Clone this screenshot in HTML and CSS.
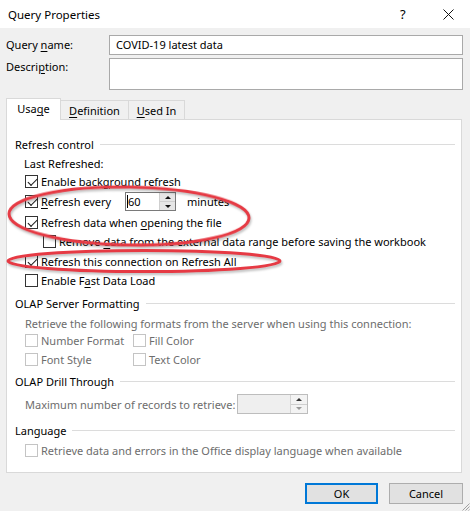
FILE: index.html
```html
<!DOCTYPE html>
<html>
<head>
<meta charset="utf-8">
<link rel="stylesheet" href="styles.css">
</head>
<body>
<div class="window">
  <div class="titlebar">
    <span class="title">Query Properties</span>
    <span class="help">?</span>
    <span class="close"><svg width="11" height="11" viewBox="0 0 11 11"><path d="M0.5 0.5 L10.5 10.5 M10.5 0.5 L0.5 10.5" stroke="#111" stroke-width="1"/></svg></span>
  </div>
  <div class="content">
    <div class="field">
      <div class="flabel">Query <u>n</u>ame:</div>
      <div class="input">COVID-19 latest data</div>
    </div>
    <div class="field desc">
      <div class="flabel">Descri<u>p</u>tion:</div>
      <div class="input tall"></div>
    </div>
    <div class="tabs">
      <div class="tab active">Usa<u>g</u>e</div>
      <div class="tab t-def"><u>D</u>efinition</div>
      <div class="tab t-used"><u>U</u>sed In</div>
    </div>
    <div class="panel">
      <div class="group h20"><span>Refresh control</span><i class="rule"></i></div>
      <div class="row h18 lr">Last Refreshed:</div>
      <div class="row h18"><span class="cb on"></span><span>Enable back<u>g</u>round refresh</span></div>
      <div class="row h23"><span class="cb on"></span><span class="every"><u>R</u>efresh every</span>
        <span class="spin"><span class="spin-text"><i class="caret"></i>60</span><span class="spin-btns"><span class="sb up"></span><span class="sb down"></span></span></span>
        <span class="minutes">minutes</span></div>
      <div class="row h19"><span class="cb on"></span><span>Refresh data when <u>o</u>pening the file</span></div>
      <div class="row h19 indent"><span class="cb"></span><span>Remove <u>d</u>ata from the external data range before saving the workbook</span></div>
      <div class="row h20"><span class="cb on"></span><span>Refresh this connection on Refresh <u>A</u>ll</span></div>
      <div class="row h19"><span class="cb"></span><span>Enable F<u>a</u>st Data Load</span></div>

      <div class="group h26"><span>OLAP Server Formatting</span><i class="rule"></i></div>
      <div class="row h14 dis">Retrieve the following formats from the server when using this connection:</div>
      <div class="row h20 dis"><span class="cell"><span class="cb off"></span><span>Number Format</span></span><span class="cell"><span class="cb off"></span><span>Fill Color</span></span></div>
      <div class="row h18 dis"><span class="cell"><span class="cb off"></span><span>Font Style</span></span><span class="cell"><span class="cb off"></span><span>Text Color</span></span></div>

      <div class="group h26"><span>OLAP Drill Through</span><i class="rule"></i></div>
      <div class="row h20 dis"><span class="maxlabel">Maximum number of records to retrieve:</span>
        <span class="spin disabled"><span class="spin-text"></span><span class="spin-btns"><span class="sb up"></span><span class="sb down"></span></span></span></div>

      <div class="group h20 lang"><span>Language</span><i class="rule"></i></div>
      <div class="row h20 dis"><span class="cb off"></span><span>Retrieve data and errors in the Office display language when available</span></div>
    </div>
    <div class="buttons">
      <div class="btn default">OK</div>
      <div class="btn">Cancel</div>
    </div>
  </div>
  <svg class="marks" width="470" height="511" viewBox="0 0 470 511">
    <ellipse cx="129" cy="216" rx="120" ry="29" transform="rotate(1 129 216)" class="ring"/>
    <ellipse cx="144" cy="261" rx="136" ry="10.5" class="ring"/>
  </svg>
  <svg class="grip" width="9" height="9" viewBox="0 0 9 9">
    <path d="M8.5 1.5 L1.5 8.5 M8.5 4.5 L4.5 8.5 M8.5 7.5 L7.5 8.5" stroke="#a0a0a0" stroke-width="1"/>
  </svg>
</div>
</body>
</html>
```

FILE: styles.css
```css
* { box-sizing: border-box; }
html, body { margin: 0; padding: 0; }
body {
  width: 470px;
  height: 511px;
  overflow: hidden;
  font-family: "Noto Sans", "Liberation Sans", sans-serif;
  font-size: 11px;
  color: #000;
  white-space: nowrap;
}
u { text-decoration: underline; text-underline-offset: 2px; text-decoration-thickness: 1px; }

.window {
  position: relative;
  width: 470px;
  height: 511px;
  background: #f0f0f0;
  display: flex;
  flex-direction: column;
}

.titlebar {
  height: 28px;
  background: #fff;
  display: flex;
  align-items: center;
  padding-left: 8px;
  font-size: 11.5px;
}
.title { flex: 1; }
.help { width: 10px; margin-right: 33px; font-size: 13px; }
.close { width: 11px; margin-right: 16px; display: flex; }

.content {
  flex: 1;
  display: flex;
  flex-direction: column;
  padding: 7px 7px 0 6px;
}

.field { display: flex; height: 20px; }
.field.desc { margin-top: 3px; height: 32px; }
.flabel { width: 103px; line-height: 18px; padding-top: 1px; }
.field.desc .flabel { padding-top: 0; }
.input {
  flex: 1;
  border: 1px solid #a9a9a9;
  background: #fff;
  padding: 0 6px;
  line-height: 18px;
}
.input.tall { height: 32px; }

.tabs {
  display: flex;
  margin-top: 8px;
  height: 21px;
  align-items: flex-end;
  position: relative;
  z-index: 1;
}
.tab {
  height: 19px;
  border: 1px solid #d9d9d9;
  border-bottom: none;
  display: flex;
  align-items: center;
  justify-content: center;
  padding-top: 1px;
}
.tab.active {
  width: 55px;
  height: 22px;
  background: #fff;
  margin-bottom: -1px;
  border-color: #d9d9d9;
  padding-top: 0;
  padding-bottom: 2px;
}
.t-def { width: 68px; border-left: none; }
.t-used { width: 56px; border-left: none; }

.panel {
  width: 456px;
  height: 354px;
  background: #fff;
  border: 1px solid #d9d9d9;
  padding-top: 14px;
  display: flex;
  flex-direction: column;
}

.group {
  display: flex;
  align-items: center;
  padding-left: 8px;
  padding-right: 6px;
}
.group .rule {
  flex: 1;
  border-top: 1px solid #dcdcdc;
  margin-left: 6px;
  height: 0;
}
.group.lang { margin-top: 6px; }

.row {
  display: flex;
  align-items: center;
  padding-left: 18px;
}
.row.lr { padding-left: 17px; }
.row.indent { padding-left: 36px; }
.h14 { height: 14px; }
.h18 { height: 18px; }
.h19 { height: 19px; }
.h20 { height: 20px; }
.h23 { height: 23px; }
.h26 { height: 26px; }

.cb {
  width: 13px;
  height: 13px;
  border: 1px solid #333;
  background: #fff;
  margin-right: 3px;
  flex: none;
  position: relative;
}
.cb.on::after {
  content: "";
  position: absolute;
  left: 2px;
  top: 1px;
  width: 7px;
  height: 4px;
  border-left: 1px solid #222;
  border-bottom: 1px solid #222;
  transform: translate(0.5px, 1.5px) rotate(-45deg) scaleX(1.15);
  transform-origin: center;
}
.cb.off { border-color: #c4c4c4; }

.dis { color: #6d6d6d; }

.every { width: 84px; }
.spin {
  width: 51px;
  height: 19px;
  border: 1px solid #7a7a7a;
  background: #fff;
  display: flex;
}
.spin-text {
  flex: 1;
  display: flex;
  align-items: center;
  padding-left: 1px;
  line-height: 17px;
}
.caret {
  width: 1px;
  height: 13px;
  background: #000;
}
.spin-btns {
  width: 16px;
  display: flex;
  flex-direction: column;
  border-left: 1px solid #cfcfcf;
}
.sb {
  flex: 1;
  background: #e6e6e6;
  display: flex;
  align-items: center;
  justify-content: center;
}
.sb.up { border-bottom: 1px solid #cfcfcf; }
.sb::after {
  content: "";
  width: 0;
  height: 0;
  border-left: 3px solid transparent;
  border-right: 3px solid transparent;
}
.sb.up::after { border-bottom: 3px solid #111; }
.sb.down::after { border-top: 3px solid #111; }
.minutes { margin-left: 11px; }

.spin.disabled {
  width: 71px;
  height: 20px;
  border-color: #bdbdbd;
  background: #efefef;
}
.spin.disabled .spin-btns { border-left-color: #d4d4d4; width: 17px; }
.spin.disabled .sb { background: #f3f3f3; }
.spin.disabled .sb.up::after { border-bottom-color: #333; }
.spin.disabled .sb.down::after { border-top-color: #9a9a9a; }

.cell { display: flex; align-items: center; width: 108px; }
.maxlabel { width: 212px; }

.buttons {
  display: flex;
  justify-content: flex-end;
  gap: 11px;
  margin-top: 10px;
}
.btn {
  width: 74px;
  height: 21px;
  background: #e1e1e1;
  border: 1px solid #adadad;
  display: flex;
  align-items: center;
  justify-content: center;
}
.btn.default {
  width: 73px;
  border: 2px solid #0078d7;
}

.marks {
  position: absolute;
  left: 0;
  top: 0;
  pointer-events: none;
}
.ring {
  fill: none;
  stroke: #e63a44;
  stroke-width: 3;
  filter: drop-shadow(1px 2px 1px rgba(0, 0, 0, 0.25));
}
.grip {
  position: absolute;
  right: 0;
  bottom: 0;
}
```
